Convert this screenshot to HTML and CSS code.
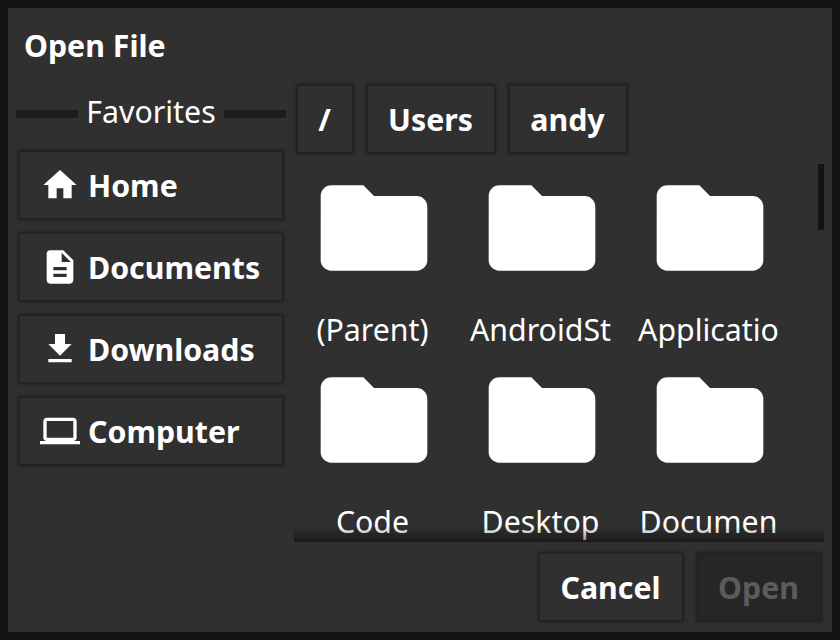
FILE: index.html
```html
<!DOCTYPE html>
<html lang="en">
<head>
<meta charset="utf-8">
<title>Open File</title>
<link rel="stylesheet" href="styles.css">
</head>
<body>
<svg class="defs" width="0" height="0">
  <symbol id="folder" viewBox="0 0 24 24"><path d="M10 4H4c-1.1 0-1.99.9-1.99 2L2 18c0 1.1.9 2 2 2h16c1.1 0 2-.9 2-2V8c0-1.1-.9-2-2-2h-8l-2-2z"/></symbol>
</svg>
<main class="dialog">
  <h1 class="title">Open File</h1>
  <div class="body">
    <aside class="sidebar">
      <div class="heading"><span class="rule"></span><span class="heading-text">Favorites</span><span class="rule"></span></div>
      <nav class="favorites">
        <button class="button favorite"><svg class="icon" viewBox="0 0 24 24"><path d="M10 20v-6h4v6h5v-8h3L12 3 2 12h3v8z"/></svg><span class="label">Home</span></button>
        <button class="button favorite"><svg class="icon" viewBox="0 0 24 24"><path d="M14 2H6c-1.1 0-1.99.9-1.99 2L4 20c0 1.1.89 2 1.99 2H18c1.1 0 2-.9 2-2V8l-6-6zm2 16H8v-2h8v2zm0-4H8v-2h8v2zm-3-5V3.500L18.500 9H13z"/></svg><span class="label">Documents</span></button>
        <button class="button favorite"><svg class="icon" viewBox="0 0 24 24"><path d="M19 9h-4V3H9v6H5l7 7 7-7zM5 18v2h14v-2H5z"/></svg><span class="label">Downloads</span></button>
        <button class="button favorite"><svg class="icon" viewBox="0 0 24 24"><path d="M20 18c1.100 0 1.990-.9 1.990-2L22 6c0-1.100-.9-2-2-2H4c-1.100 0-2 .9-2 2v10c0 1.100.9 2 2 2H0v2h24v-2h-4zM4 6h16v10H4V6z"/></svg><span class="label">Computer</span></button>
      </nav>
    </aside>
    <section class="content">
      <nav class="breadcrumbs">
        <button class="button"><span class="label">/</span></button>
        <button class="button"><span class="label">Users</span></button>
        <button class="button"><span class="label">andy</span></button>
      </nav>
      <div class="files">
        <div class="grid">
          <div class="file"><svg class="folder"><use href="#folder"/></svg><span class="name">(Parent)</span></div>
          <div class="file"><svg class="folder"><use href="#folder"/></svg><span class="name">AndroidSt</span></div>
          <div class="file"><svg class="folder"><use href="#folder"/></svg><span class="name">Applicatio</span></div>
          <div class="file"><svg class="folder"><use href="#folder"/></svg><span class="name">Code</span></div>
          <div class="file"><svg class="folder"><use href="#folder"/></svg><span class="name">Desktop</span></div>
          <div class="file"><svg class="folder"><use href="#folder"/></svg><span class="name">Documen</span></div>
        </div>
        <div class="scrollbar"></div>
        <div class="fade"></div>
      </div>
    </section>
  </div>
  <footer class="actions">
    <button class="button cancel"><span class="label">Cancel</span></button>
    <button class="button open" disabled><span class="label">Open</span></button>
  </footer>
</main>
</body>
</html>
```
FILE: styles.css
```css
* { box-sizing: border-box; }

body {
  margin: 0;
  width: 840px;
  height: 640px;
  padding: 8px;
  overflow: hidden;
  background: #121212;
  color: #fff;
  font: 30.3px/40px "Noto Sans", sans-serif;
}

.defs { position: absolute; }

.dialog {
  display: flex;
  flex-direction: column;
  height: 624px;
  padding: 8px;
  background: #303030;
}

.title {
  margin: 0;
  height: 60px;
  padding: 10px 8px;
  font-size: 30.3px;
  font-weight: 700;
  line-height: 40px;
}

.body {
  display: grid;
  grid-template-columns: 270px 530px;
  gap: 8px;
  height: 466px;
  flex: none;
}

.heading {
  display: flex;
  align-items: center;
  gap: 8px;
  height: 76px;
}

.heading-text {
  width: 130px;
  height: 44px;
  text-align: center;
  white-space: nowrap;
}

.rule {
  flex: 1;
  height: 8px;
  background: #1c1c1c;
}

.favorites {
  display: flex;
  flex-direction: column;
  gap: 16px;
  padding: 0 4px;
}

.button {
  display: flex;
  align-items: center;
  justify-content: center;
  height: 66px;
  margin: 0;
  padding: 0;
  border: 0;
  background: #303030;
  color: #fff;
  font: 700 30.3px/40px "Noto Sans", sans-serif;
  white-space: nowrap;
  box-shadow: 0 0 0 1px #202020, 0 0 3px 2px #1e1e1e;
}

.label {
  padding-top: 2px;
}

.breadcrumbs .label,
.actions .label {
  padding-right: 1px;
}

.favorite {
  justify-content: flex-start;
  gap: 8px;
  padding-left: 20px;
}

.icon {
  width: 40px;
  height: 40px;
  fill: #fff;
}

.breadcrumbs {
  display: flex;
  gap: 16px;
  height: 88px;
  padding: 10px 4px 12px;
}

.breadcrumbs .button:nth-child(1) { width: 54px; }
.breadcrumbs .button:nth-child(2) { width: 126px; }
.breadcrumbs .button:nth-child(3) { width: 116px; }

.files {
  position: relative;
  height: 378px;
  overflow: hidden;
}

.grid {
  display: grid;
  grid-template-columns: repeat(3, 144px);
  grid-auto-rows: 192px;
  column-gap: 24px;
  padding-left: 8px;
}

.file {
  display: flex;
  flex-direction: column;
  align-items: center;
}

.folder {
  width: 128px;
  height: 128px;
  fill: #fff;
}

.name {
  margin-top: 18px;
  padding-right: 3px;
  white-space: nowrap;
}

.scrollbar {
  position: absolute;
  top: 0;
  right: 0;
  width: 6px;
  height: 66px;
  background: #131313;
}

.fade {
  position: absolute;
  left: 0;
  right: 0;
  bottom: 0;
  height: 16px;
  background: linear-gradient(rgba(0, 0, 0, 0), rgba(0, 0, 0, 0.45));
}

.actions {
  display: flex;
  justify-content: flex-end;
  gap: 16px;
  padding: 12px 4px 0;
}

.cancel { width: 142px; }

.open {
  width: 122px;
  background: #262626;
  color: #5c5c5c;
}
```
